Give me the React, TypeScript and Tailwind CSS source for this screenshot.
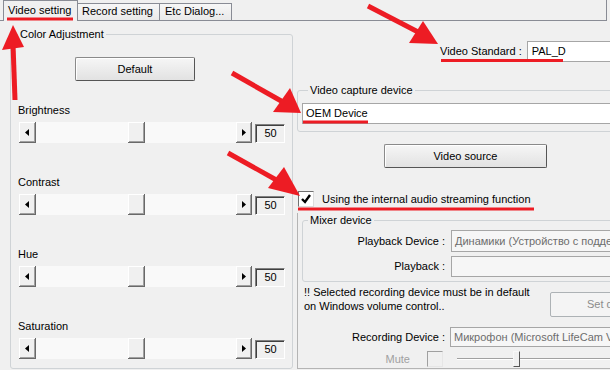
import React from 'react';

// Win7-ish capture settings dialog, "Video setting" tab

const Arrow = ({ left, w }: { left?: boolean; w: number }) => (
  <div
    style={{ width: w }}
    className="h-full flex items-center justify-center bg-[#f0f0f0] border-r border-b border-[#696969] shadow-[inset_1px_1px_0_#fff,inset_-1px_-1px_0_#a0a0a0]"
  >
    <svg width="4" height="7" viewBox="0 0 4 7">
      <polygon points={left ? '4,0 0,3.5 4,7' : '0,0 4,3.5 0,7'} fill="#000" />
    </svg>
  </div>
);

const Slider = ({ label, first }: { label: string; first?: boolean }) => (
  <div className={first ? 'mt-[23px]' : 'mt-[33px]'}>
    <div className="pl-[7px] leading-[13px]">{label}</div>
    <div className="mt-[5px] ml-[8px] flex h-[21px]">
      <Arrow left w={17} />
      <div className="w-[200px] h-full bg-[#f9f9f9] flex">
        <div className="ml-[92px] w-[17px] h-full bg-[#f0f0f0] border-r border-b border-[#696969] shadow-[inset_1px_1px_0_#fff,inset_-1px_-1px_0_#a0a0a0]" />
      </div>
      <Arrow w={16} />
      <div className="ml-[3px] mt-[2px] w-[30px] h-[19px] border border-t-[#808080] border-l-[#808080] border-b-white border-r-white bg-[#f0f0f0] shadow-[inset_1px_1px_0_#404040] flex items-center justify-center pl-[1px]">
        50
      </div>
    </div>
  </div>
);

const Button = ({ children, className }: { children?: React.ReactNode; className: string }) => (
  <div
    className={
      'flex items-center justify-center rounded-[2px] border border-[#8a8a8a] border-b-[#555] border-r-[#555] bg-linear-to-b from-[#f6f6f6] to-[#e2e2e2] shadow-[inset_1px_1px_0_#fff] ' +
      className
    }
  >
    {children}
  </div>
);

const Check = () => (
  <svg width="12" height="12" viewBox="0 0 12 12">
    <polyline points="2,6 5,9 10,2" fill="none" stroke="#000" strokeWidth="2.4" />
  </svg>
);

export default function App() {
  return (
    <div className="relative w-[610px] h-[370px] overflow-hidden bg-[#f0f0f0] text-[11px] text-black font-['Liberation_Sans',Arial,sans-serif]">
      {/* tab strip */}
      <div className="w-[607px] h-[21px] flex items-end pl-[3px] border-b border-r border-[#898c95] leading-[13px]">
        <div className="w-[75px] h-[21px] -mb-px border border-b-0 border-[#898c95] bg-[#f0f0f0] pl-[4px] pt-[3px]">
          Video setting
        </div>
        <div className="w-[82px] h-[17px] border-t border-r border-[#898c95] bg-linear-to-b from-[#f7f7f7] to-[#e9e9e9] pl-[4px] pt-[1px]">
          Record setting
        </div>
        <div className="w-[72px] h-[17px] border-t border-r border-[#898c95] bg-linear-to-b from-[#f7f7f7] to-[#e9e9e9] pl-[5px] pt-[1px]">
          Etc Dialog...
        </div>
      </div>

      <div className="flex">
        {/* left: color adjustment */}
        <fieldset className="ml-[10px] mt-[7px] w-[283px] h-[341px] shrink-0 border border-[#cfd3d6] rounded-[3px]">
          <legend className="ml-[7px] px-[2px] leading-[13px]">Color Adjustment</legend>
          <Button className="mt-[16px] ml-[64px] w-[120px] h-[24px]">Default</Button>
          <Slider label="Brightness" first />
          <Slider label="Contrast" />
          <Slider label="Hue" />
          <Slider label="Saturation" />
        </fieldset>

        {/* right column */}
        <div className="flex-1 min-w-0">
          <div className="mt-[20px] h-[21px] flex items-center pl-[147px]">
            <span className="whitespace-nowrap">Video Standard :</span>
            <div className="ml-[5px] w-[120px] h-full shrink-0 bg-white border border-[#a6a6a6] flex items-center pl-[4px]">
              PAL_D
            </div>
          </div>

          <fieldset className="mt-[22px] ml-[4px] w-[330px] border border-[#cfd3d6] rounded-[3px] pb-[7px]">
            <legend className="ml-[10px] px-[2px] leading-[13px]">Video capture device</legend>
            <div className="mt-[6px] ml-[4px] w-[320px] h-[21px] bg-white border border-[#a6a6a6] flex items-center pl-[3px]">
              OEM Device
            </div>
          </fieldset>

          <Button className="mt-[12px] ml-[91px] w-[163px] h-[24px]">Video source</Button>

          <div className="mt-[23px] ml-[5px] h-[16px] flex items-center">
            <div className="w-[16px] h-[16px] bg-white border border-[#707070] border-b-[#dcdcdc] border-r-[#dcdcdc] flex items-center justify-center">
              <Check />
            </div>
            <span className="ml-[8px] whitespace-nowrap">Using the internal audio streaming function</span>
          </div>

          {/* audio panel */}
          <div className="mt-[6px] ml-[4px] w-[330px] h-[156px] border-l border-b border-[#b4b4b4] pt-[1px]">
            <fieldset className="ml-[4px] w-[320px] border border-[#cfd3d6] rounded-[3px] pb-[4px]">
              <legend className="ml-[5px] px-[2px] leading-[13px]">Mixer device</legend>
              <div className="mt-[3px] h-[22px] flex items-center">
                <span className="w-[142px] text-right whitespace-nowrap">Playback Device :</span>
                <div className="ml-[6px] flex-1 h-full bg-[#f6f6f6] border border-[#a6a6a6] flex items-center pl-[3px] text-[#6d6d6d] whitespace-nowrap overflow-hidden">
                  Динамики (Устройство с поддержкой High Definition Audio)
                </div>
              </div>
              <div className="mt-[4px] h-[21px] flex items-center">
                <span className="w-[142px] text-right">Playback :</span>
                <div className="ml-[6px] flex-1 h-full bg-[#f6f6f6] border border-[#a6a6a6]" />
              </div>
            </fieldset>

            <div className="mt-[3px] flex">
              <div className="w-[252px] shrink-0 pl-[6px] leading-[14px]">
                <div className="whitespace-nowrap">!! Selected recording device must be in default</div>
                <div className="whitespace-nowrap">on Windows volume control..</div>
              </div>
              <div className="mt-[7px] w-[130px] h-[25px] shrink-0 rounded-[2px] border border-[#adb2b5] bg-[#f4f4f4] text-[#8c8c8c] pl-[36px] flex items-center whitespace-nowrap">
                Set default
              </div>
            </div>

            <div className="mt-[10px] h-[20px] flex items-center">
              <span className="w-[147px] text-right whitespace-nowrap">Recording Device :</span>
              <div className="ml-[5px] flex-1 h-full bg-[#f6f6f6] border border-[#a6a6a6] flex items-center pl-[3px] text-[#6d6d6d] whitespace-nowrap overflow-hidden">
                Микрофон (Microsoft LifeCam VX-800)
              </div>
            </div>

            <div className="mt-[4px] h-[16px] flex items-center">
              <span className="w-[112px] text-right text-[#a0a0a0]">Mute</span>
              <div className="ml-[17px] w-[16px] h-[16px] border border-[#a0a0a0] border-b-[#e6e6e6] border-r-[#e6e6e6] bg-[#f0f0f0]" />
              <div className="ml-[14px] flex-1 h-full flex items-center">
                <div className="w-[56px] h-[2px] border-t border-[#a0a0a0] border-b border-b-white" />
                <div className="w-[7px] h-[16px] border border-[#f8f8f8] border-b-[#555] border-r-[#555] bg-[#f0f0f0]" />
                <div className="flex-1 h-[2px] border-t border-[#a0a0a0] border-b border-b-white" />
              </div>
            </div>
          </div>
        </div>
      </div>

      {/* red annotation marks */}
      <svg className="absolute inset-0 pointer-events-none" width="610" height="370">
        <g stroke="#ed1c24" strokeWidth="3">
          <line x1="7" y1="19" x2="73" y2="19" />
          <line x1="441" y1="60.5" x2="563" y2="60.5" />
          <line x1="303" y1="122" x2="368" y2="122" />
          <line x1="298" y1="209" x2="534" y2="209" />
        </g>
        <g stroke="#ed1c24" strokeWidth="5">
          <line x1="15" y1="100" x2="13" y2="44" />
          <line x1="368" y1="6" x2="420" y2="33" />
          <line x1="232" y1="73" x2="283" y2="102" />
          <line x1="228" y1="153" x2="280" y2="182" />
        </g>
        <g fill="#ed1c24">
          <polygon points="13,25 2,50 24,47" />
          <polygon points="438,44 409,43 423,21" />
          <polygon points="301,113 273,112 290,88" />
          <polygon points="300,196 268,188 284,167" />
        </g>
      </svg>
    </div>
  );
}
